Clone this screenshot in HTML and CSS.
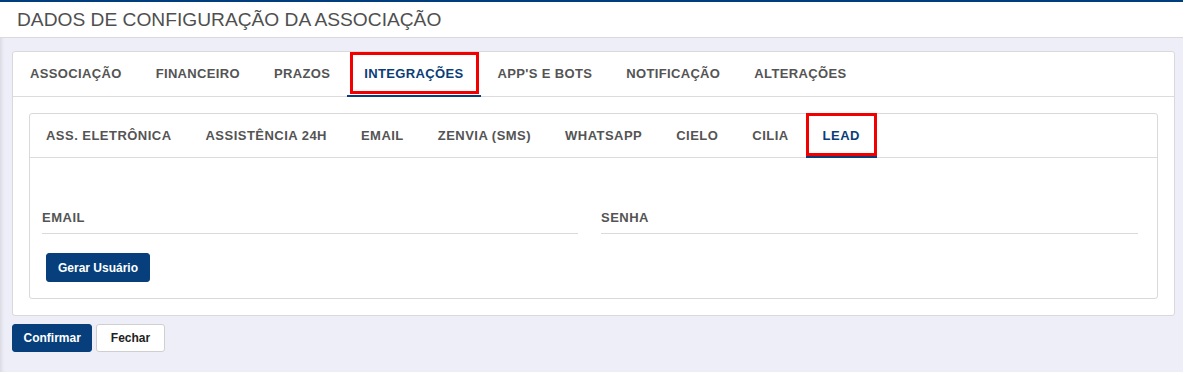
FILE: index.html
```html
<!DOCTYPE html>
<html lang="pt-BR">
<head>
<meta charset="utf-8">
<title>Dados de configuração da associação</title>
<link rel="stylesheet" href="styles.css">
</head>
<body>
<div class="page">
  <header class="page-header">
    <h1 class="page-title">DADOS DE CONFIGURAÇÃO DA ASSOCIAÇÃO</h1>
  </header>
  <main class="content">
    <section class="card">
      <nav class="tabs">
        <a class="tab">ASSOCIAÇÃO</a>
        <a class="tab">FINANCEIRO</a>
        <a class="tab">PRAZOS</a>
        <a class="tab active marked">INTEGRAÇÕES</a>
        <a class="tab">APP'S E BOTS</a>
        <a class="tab">NOTIFICAÇÃO</a>
        <a class="tab">ALTERAÇÕES</a>
      </nav>
      <div class="tab-body">
        <section class="card">
          <nav class="tabs tabs-inner">
            <a class="tab">ASS. ELETRÔNICA</a>
            <a class="tab">ASSISTÊNCIA 24H</a>
            <a class="tab">EMAIL</a>
            <a class="tab">ZENVIA (SMS)</a>
            <a class="tab">WHATSAPP</a>
            <a class="tab">CIELO</a>
            <a class="tab">CILIA</a>
            <a class="tab active marked marked-inner">LEAD</a>
          </nav>
          <div class="form">
            <div class="form-grid">
              <div class="field">
                <label class="field-label">EMAIL</label>
                <div class="field-input"></div>
              </div>
              <div class="field">
                <label class="field-label">SENHA</label>
                <div class="field-input"></div>
              </div>
            </div>
            <button class="btn btn-primary btn-generate">Gerar Usuário</button>
          </div>
        </section>
      </div>
    </section>
    <div class="actions">
      <button class="btn btn-primary">Confirmar</button>
      <button class="btn btn-default">Fechar</button>
    </div>
  </main>
</div>
</body>
</html>
```

FILE: styles.css
```css
* { box-sizing: border-box; }

html, body {
  margin: 0;
  padding: 0;
  background: #edeef7;
  font-family: "Liberation Sans", Arial, sans-serif;
}

.page {
  min-height: 372px;
  border-top: 2px solid #003d7c;
  box-shadow: inset 4px 0 4px -3px rgba(0, 0, 0, 0.12);
}

.page-header {
  height: 36px;
  background: #fff;
  border-bottom: 1px solid #dadada;
  display: flex;
  align-items: center;
  padding-left: 17px;
}

.page-title {
  margin: 0;
  font-size: 19.2px;
  font-weight: normal;
  color: #4f4f4f;
  line-height: 1;
}

.content {
  padding: 13px 8px 0 12px;
}

.card {
  background: #fff;
  border: 1px solid #d9d9d9;
  border-radius: 3px;
}

.tabs {
  display: flex;
  height: 45px;
  border-bottom: 1px solid #dcdcdc;
}

.tabs-inner {
  height: 44px;
}

.tab {
  position: relative;
  display: flex;
  align-items: center;
  padding: 0 17px;
  margin-bottom: -1px;
  border-bottom: 2px solid transparent;
  font-size: 13px;
  font-weight: bold;
  letter-spacing: 0.35px;
  color: #545454;
  white-space: nowrap;
}

.tabs-inner .tab {
  letter-spacing: 0.47px;
}

.tabs-inner .tab:first-child {
  padding-left: 16px;
}

.tab.active {
  color: #0a3d78;
  border-bottom-color: #0a3d78;
}

.tab.marked::after {
  content: "";
  position: absolute;
  left: 3px;
  right: 2px;
  top: 0;
  bottom: 1px;
  border: 3px solid #f20000;
}

.tab.marked-inner::after {
  left: 0;
  right: 0;
  top: -1px;
  bottom: 0;
}

.tab-body {
  padding: 16px;
}

.form {
  padding: 52px 0 16px 0;
}

.form-grid {
  display: grid;
  grid-template-columns: 536px 537px;
  column-gap: 23px;
  padding-left: 12px;
}

.field-label {
  display: block;
  font-size: 13px;
  line-height: 15px;
  font-weight: bold;
  letter-spacing: 0.5px;
  color: #545454;
}

.field-input {
  height: 9px;
  border-bottom: 1px solid #dadada;
}

.btn {
  font-family: "Liberation Sans", Arial, sans-serif;
  font-size: 12px;
  font-weight: bold;
  height: 28px;
  border-radius: 3px;
  border: 1px solid transparent;
  cursor: pointer;
}

.btn-primary {
  background: #063f7b;
  border-color: #063f7b;
  color: #fff;
  padding: 0 10.5px;
}

.btn-default {
  background: #fff;
  border-color: #cfcfcf;
  color: #222;
  padding: 0 13.5px;
}

.btn-generate {
  height: 29px;
  margin: 19px 0 0 16px;
  padding: 0 11px;
}

.actions {
  display: flex;
  gap: 4px;
  margin-top: 8px;
}
```
